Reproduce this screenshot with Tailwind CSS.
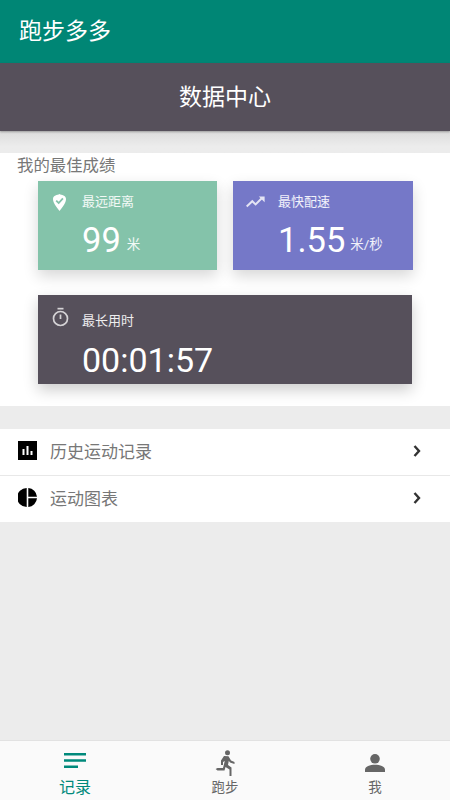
<!DOCTYPE html>
<html lang="zh-CN">

<head>
    <meta charset="UTF-8">
    <meta name="viewport" content="width=device-width, initial-scale=1.0">
    <title>跑步多多</title>
    <script src="https://cdn.jsdelivr.net/npm/@tailwindcss/browser@4"></script>
</head>

<body class="w-[450px] h-[800px] overflow-hidden bg-[#ececec] flex flex-col font-['Roboto','Noto_Sans_CJK_SC',sans-serif]">
    <!-- app bar -->
    <header class="h-[63px] shrink-0 bg-[#008675] flex items-center pl-[19px] pt-[2px] text-white text-[23px]">跑步多多</header>

    <!-- page title -->
    <div class="relative h-[68px] shrink-0 bg-[#56505b] flex items-center justify-center pt-[2px] text-white text-[23px] shadow-[0_1px_2px_rgba(0,0,0,0.3)]">数据中心</div>
    <div class="h-[22px] shrink-0 bg-gradient-to-b from-[#dcdcdc] to-[#ececec] to-70%"></div>

    <!-- best results -->
    <section class="h-[253px] shrink-0 bg-white">
        <p class="h-[28px] pl-[17px] pt-[1px] text-[16.4px] leading-[24px] text-[#777]">我的最佳成绩</p>
        <div class="flex gap-[16px] pl-[38px]">
            <div class="w-[179px] h-[89px] bg-[#84c3aa] text-white shadow-[0_6px_14px_rgba(0,0,0,0.16)] pl-[15px]">
                <div class="flex items-center h-[42px]">
                    <svg class="w-[13px] h-[17px]" viewBox="0 0 13 17"><path fill="#fff" d="M6.5 0C8.5 1.2 13 1 13 5 13 9 9.5 13 6.5 17 3.5 13 0 9 0 5 0 1 4.5 1.2 6.5 0Z" /><path fill="none" stroke="#84c3aa" stroke-width="1.8" d="M3.2 6.6 5.7 9 9.9 4.4" /></svg>
                    <span class="ml-[16px] text-[13px] text-white/90">最远距离</span>
                </div>
                <div class="ml-[29px] flex items-baseline">
                    <span class="text-[34.5px] leading-[35px]">99</span>
                    <span class="ml-[6px] text-[13.5px] text-white/90 -translate-y-[3px]">米</span>
                </div>
            </div>
            <div class="w-[180px] h-[89px] bg-[#7578c8] text-white shadow-[0_6px_14px_rgba(0,0,0,0.16)] pl-[13px]">
                <div class="flex items-center h-[42px]">
                    <svg class="w-[19px] h-[12px]" viewBox="0 0 19 12"><path fill="none" stroke="#e4e4f4" stroke-width="2" d="M.7 10.5 6.3 5.2 9.6 8.4 16 2" /><path fill="#e4e4f4" d="M12.8.4H18.6V6.2Z" /></svg>
                    <span class="ml-[13px] text-[13px] text-white/90">最快配速</span>
                </div>
                <div class="ml-[32px] flex items-baseline">
                    <span class="text-[34.5px] leading-[35px]">1.55</span>
                    <span class="ml-[5px] text-[13.5px] text-white/90 -translate-y-[3px]">米/秒</span>
                </div>
            </div>
        </div>
        <div class="ml-[38px] mt-[25px] w-[374px] h-[89px] bg-[#56505b] text-white shadow-[0_6px_14px_rgba(0,0,0,0.2)] pl-[14px]">
            <div class="flex h-[42px]">
                <svg class="w-[17px] h-[20px] mt-[12px]" viewBox="0 0 17 20"><g fill="none" stroke="#d5d3d6" stroke-width="1.7"><circle cx="8.5" cy="11.5" r="7" /><path d="M8.5 7.5V12" /></g><path fill="#d5d3d6" d="M5.5 .8H11.5V2.5H5.5Z" /></svg>
                <span class="ml-[13px] mt-[16px] text-[13px] leading-[20px] text-white/90">最长用时</span>
            </div>
            <div class="ml-[30px] mt-[3px] text-[34px] leading-[40px]">00:01:57</div>
        </div>
    </section>

    <!-- links -->
    <nav class="mt-[23px] bg-white text-[#777] text-[17px]">
        <a class="h-[47px] flex items-center pl-[18px] pr-[29px] border-b border-[#e8e8e8]">
            <svg class="w-[19px] h-[19px] mb-[3px]" viewBox="0 0 19 19"><path fill="#000" d="M0 0H19V19H0Z" /><path fill="#fff" d="M4.5 8H6.5V14H4.5ZM8.5 5H10.5V14H8.5ZM12.5 10H14.5V14H12.5Z" /></svg>
            <span class="ml-[13px] flex-1 pt-[2px]">历史运动记录</span>
            <svg class="w-[8px] h-[12px] mb-[3px]" viewBox="0 0 8 12"><path fill="none" stroke="#333" stroke-width="2.4" d="M1.5 1 6 6 1.5 11" /></svg>
        </a>
        <a class="h-[46px] flex items-center pl-[18px] pr-[29px]">
            <svg class="w-[19px] h-[19px] mb-[3px]" viewBox="0 0 19 19"><path fill="#000" d="M8.7 0V19A9.5 9.5 0 0 1 8.7 0ZM10.3 0A9.5 9.5 0 0 1 19 8.7H10.3ZM10.3 10.3H19A9.5 9.5 0 0 1 10.3 19Z" /></svg>
            <span class="ml-[13px] flex-1 pt-[2px]">运动图表</span>
            <svg class="w-[8px] h-[12px] mb-[3px]" viewBox="0 0 8 12"><path fill="none" stroke="#333" stroke-width="2.4" d="M1.5 1 6 6 1.5 11" /></svg>
        </a>
    </nav>

    <!-- bottom tabs -->
    <footer class="mt-auto h-[60px] shrink-0 bg-[#fafafa] border-t border-[#e2e2e2] grid grid-cols-3 text-[#666]">
        <div class="flex flex-col items-center text-[#00897b]">
            <svg class="w-[22px] h-[15px] mt-[12px]" viewBox="0 0 22 15"><path fill="#00897b" d="M0 0H22V2.4H0ZM0 6.3H22V8.7H0ZM0 12.6H14V15H0Z" /></svg>
            <span class="text-[16px] leading-[20px] mt-[10px]">记录</span>
        </div>
        <div class="flex flex-col items-center">
            <svg class="w-[20px] h-[26px] mt-[9px]" viewBox="0 0 20 26"><circle fill="#666" cx="12.5" cy="2.8" r="2.5" /><path fill="#666" d="M9 6 13.5 6.3 16 10.5 19.5 12V14L15 12.6 13.8 10.8 13 15 16.5 17.5V26H14.5V19.5L10.5 17 9.5 20.5 2.5 20.5 0.6 19 2.5 18H8L9.8 11 8 12V15H6V10.5Z" /></svg>
            <span class="text-[13.5px] leading-[17px] mt-[3px]">跑步</span>
        </div>
        <div class="flex flex-col items-center">
            <svg class="w-[20px] h-[18px] mt-[13px]" viewBox="0 0 20 18"><circle fill="#666" cx="10" cy="4.8" r="4.8" /><path fill="#666" d="M0 18V15.5C0 12.5 5 10.8 10 10.8S20 12.5 20 15.5V18Z" /></svg>
            <span class="text-[13.5px] leading-[17px] mt-[7px]">我</span>
        </div>
    </footer>
</body>

</html>
